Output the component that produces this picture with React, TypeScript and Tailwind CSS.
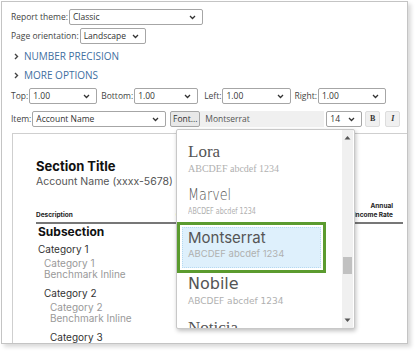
import React from "react";

const Caret: React.FC = () => (
  <svg width="7" height="5" viewBox="0 0 7 5" className="shrink-0">
    <path d="M1 1l2.5 2.5L6 1" fill="none" stroke="#333" strokeWidth="1.3" />
  </svg>
);

const Select: React.FC<{ value: string; width: string }> = ({ value, width }) => (
  <div
    className={`${width} h-[16px] border border-[#a6a6a6] rounded-[2px] bg-white flex items-center justify-between pl-[3px] pr-[6px] text-[#333]`}
  >
    <span>{value}</span>
    <Caret />
  </div>
);

const Chevron: React.FC = () => (
  <svg width="5" height="7" viewBox="0 0 5 7" className="mr-[5px]">
    <path d="M1 1l2.5 2.5L1 6" fill="none" stroke="#444" strokeWidth="1.4" />
  </svg>
);

const fonts = [
  { name: "Lora", nameCls: "font-['Liberation_Serif',serif] text-[17px]", sampleCls: "font-['Liberation_Serif',serif] text-[10px]" },
  { name: "Marvel", nameCls: "font-['DejaVu_Sans',sans-serif] text-[16px] font-light [font-stretch:condensed] scale-x-[0.8] origin-left", sampleCls: "font-['DejaVu_Sans',sans-serif] text-[8px] scale-x-[0.8] origin-left" },
];

export default function App() {
  return (
    <div className="w-[417px] h-[354px] bg-white font-['Open_Sans',sans-serif] text-[8.5px] text-[#444]">
      <div className="relative ml-[1px] mt-[1px] w-[407px] h-[343px] border border-[#c4c4c4] shadow-[3px_3px_4px_rgba(0,0,0,0.15)] overflow-hidden">
        <div className="pl-[9px] pt-[7px]">
          <div className="flex items-center gap-[1px]">
            <span>Report theme:</span>
            <Select value="Classic" width="w-[134px]" />
          </div>
          <div className="flex items-center gap-[1px] mt-[3px]">
            <span>Page orientation:</span>
            <Select value="Landscape" width="w-[66px]" />
          </div>
          <div className="flex items-center h-[19px] mt-[3px] pl-[3px] text-[#3f6f9f] text-[10px]">
            <Chevron />
            NUMBER PRECISION
          </div>
          <div className="flex items-center h-[19px] pl-[3px] text-[#3f6f9f] text-[10px]">
            <Chevron />
            MORE OPTIONS
          </div>
          <div className="flex items-center mt-[3px]">
            <span>Top:</span>
            <Select value="1.00" width="w-[68px] ml-[1px]" />
            <span className="ml-[4px]">Bottom:</span>
            <Select value="1.00" width="w-[64px] ml-[1px]" />
            <span className="ml-[6px]">Left:</span>
            <Select value="1.00" width="w-[69px] ml-[1px]" />
            <span className="ml-[3px]">Right:</span>
            <Select value="1.00" width="w-[68px] ml-[1px]" />
          </div>
          <div className="flex items-center mt-[7px]">
            <span>Item:</span>
            <Select value="Account Name" width="w-[134px] ml-[1px]" />
            <div className="ml-[4px] h-[16px] w-[30px] border border-[#a6a6a6] rounded-[2px] bg-[#e8e8e8] flex items-center justify-center text-[#333]">
              Font...
            </div>
            <div className="h-[16px] w-[124px] bg-[#f0f0f0] flex items-center pl-[5px] text-[#555]">Montserrat</div>
            <Select value="14" width="w-[36px] ml-[2px]" />
            <div className="ml-[3px] h-[16px] w-[15px] border border-[#ddd] rounded-[2px] bg-[#f0f0f0] flex items-center justify-center font-['Liberation_Serif',serif] font-bold text-[8px] text-[#333]">
              B
            </div>
            <div className="ml-[5px] h-[16px] w-[15px] border border-[#ddd] rounded-[2px] bg-[#f0f0f0] flex items-center justify-center font-['Liberation_Serif',serif] italic font-bold text-[8px] text-[#333]">
              I
            </div>
          </div>

          <div className="ml-[1px] mt-[6px] h-[210px] border-l border-t border-[#cfcfcf] pl-[23px] pt-[24px] font-['Inter',sans-serif]">
            <div className="text-[13px] leading-[16px] font-bold text-[#111]">Section Title</div>
            <div className="text-[10.5px] leading-[16px] text-[#555]">Account Name (xxxx-5678)</div>
            <div className="mt-[12px] w-[367px] flex items-end border-b-2 border-[#777] pb-[2px] text-[6.5px] font-bold text-[#222] leading-[9px]">
              <span className="w-[140px]">Description</span>
              <span>C</span>
              <span className="flex-1 text-right pr-[10px]">
                Annual
                <br />
                Income Rate
              </span>
            </div>
            <div className="pl-[2px] text-[12px] leading-[16px] font-bold text-[#111]">Subsection</div>
            <div className="pl-[2px] mt-[2px] text-[10px] leading-[14px] text-[#333]">Category 1</div>
            <div className="pl-[8px] mt-[2px] text-[10px] leading-[11px] text-[#999]">
              Category 1<br />
              Benchmark Inline
            </div>
            <div className="pl-[8px] mt-[6px] text-[10px] leading-[14px] text-[#333]">Category 2</div>
            <div className="pl-[14px] mt-[2px] text-[10px] leading-[11px] text-[#999]">
              Category 2<br />
              Benchmark Inline
            </div>
            <div className="pl-[14px] mt-[6px] text-[10px] leading-[14px] text-[#333]">Category 3</div>
          </div>
        </div>

        <div className="absolute left-[174px] top-[127px] w-[179px] h-[200px] bg-white border border-[#c8c8c8] rounded-[2px] shadow-[1px_2px_4px_rgba(0,0,0,0.25)] flex overflow-hidden">
          <div className="w-[149px] pt-[11px] flex flex-col">
            {fonts.map((f, i) => (
              <div key={f.name} className={`shrink-0 pl-[11px] ${i === 0 ? "h-[43px]" : "h-[38px]"}`}>
                <div className={`${f.nameCls} leading-[22px] text-[#555]`}>{f.name}</div>
                <div className={`${f.sampleCls} leading-[12px] text-[#b0b0b0]`}>ABCDEF abcdef 1234</div>
              </div>
            ))}
            <div className="shrink-0 h-[51px] border-[3px] border-[#5b9b2f]">
              <div className="m-[2px] h-[41px] bg-[#def0fc] border border-dotted border-[#b5d9f2] pl-[5px]">
                <div className="font-['Inter',sans-serif] text-[15px] leading-[20px] text-[#555]">Montserrat</div>
                <div className="font-['Inter',sans-serif] text-[9.5px] leading-[12px] text-[#b0b0b0]">ABCDEF abcdef 1234</div>
              </div>
            </div>
            <div className="shrink-0 h-[44px] pl-[11px]">
              <div className="font-['DejaVu_Sans',sans-serif] text-[16px] leading-[22px] text-[#555]">Nobile</div>
              <div className="font-['DejaVu_Sans',sans-serif] text-[9px] leading-[12px] text-[#b0b0b0]">ABCDEF abcdef 1234</div>
            </div>
            <div className="shrink-0 h-[44px] pl-[11px]">
              <div className="font-['Liberation_Serif',serif] text-[17px] leading-[22px] text-[#555]">Noticia</div>
            </div>
          </div>
          <div className="flex-1" />
          <div className="w-[11px] mr-[1px] bg-[#f0f0f0] flex flex-col items-center">
            <svg width="7" height="5" viewBox="0 0 7 5" className="mt-[5px]">
              <path d="M0.5 4.5L3.5 1l3 3.5z" fill="#555" />
            </svg>
            <div className="mt-[117px] w-[9px] h-[17px] bg-[#c1c1c1]" />
            <div className="flex-1" />
            <svg width="7" height="5" viewBox="0 0 7 5" className="mb-[5px]">
              <path d="M0.5 0.5L3.5 4l3-3.5z" fill="#555" />
            </svg>
          </div>
        </div>
      </div>
    </div>
  );
}
